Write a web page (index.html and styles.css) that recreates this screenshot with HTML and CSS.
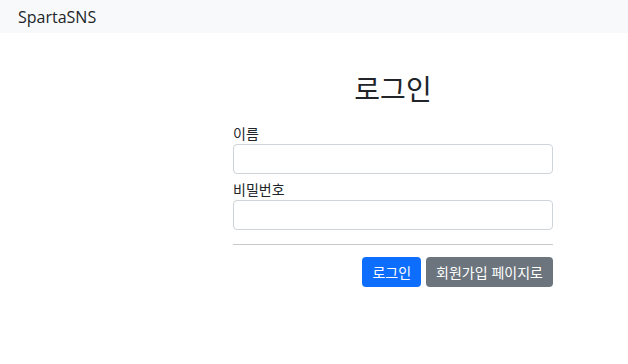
FILE: index.html
```html
<!DOCTYPE html>
<html lang="ko">
<head>
    <meta charset="UTF-8">
    <meta name="viewport" content="width=device-width, initial-scale=1.0">
    <title>SpartaSNS - 로그인</title>
    <link rel="stylesheet" href="styles.css">
</head>
<body>
    <nav class="navbar">
        <a class="navbar-brand" href="#">SpartaSNS</a>
    </nav>

    <div class="page">
        <div class="login-box">
            <h1 class="title">로그인</h1>
            <form id="loginForm">
                <div class="form-group">
                    <label for="username">이름</label>
                    <input type="text" id="username" name="username">
                </div>
                <div class="form-group">
                    <label for="password">비밀번호</label>
                    <input type="password" id="password" name="password">
                </div>
                <hr>
                <div class="actions">
                    <button type="submit" class="btn btn-primary">로그인</button>
                    <button type="button" class="btn btn-secondary">회원가입 페이지로</button>
                </div>
            </form>
        </div>
    </div>
</body>
</html>
```

FILE: styles.css
```css
* {
    margin: 0;
    padding: 0;
    box-sizing: border-box;
}

body {
    font-family: "Noto Sans CJK KR", "Noto Sans", sans-serif;
    color: #212529;
    background: #fff;
}

.navbar {
    background: #f8f9fa;
    height: 33px;
    display: flex;
    align-items: center;
    padding-left: 18px;
}

.navbar-brand {
    color: #212529;
    text-decoration: none;
    font-family: "Open Sans", "Noto Sans", sans-serif;
    font-size: 16px;
}

.page {
    display: flex;
    padding-left: 233px;
    padding-top: 38px;
}

.login-box {
    width: 320px;
}

.title {
    text-align: center;
    font-size: 28px;
    font-weight: 400;
    line-height: 34px;
    margin-bottom: 18px;
}

.form-group {
    margin-bottom: 5px;
}

.form-group label {
    display: block;
    font-size: 14px;
    line-height: 20px;
    margin-bottom: 1px;
}

.form-group input {
    width: 100%;
    height: 30px;
    border: 1px solid #ced4da;
    border-radius: 4px;
    padding: 4px 8px;
    font-size: 14px;
}

hr {
    border: none;
    border-top: 1px solid #c6c8ca;
    margin: 14px 0 12px;
}

.actions {
    display: flex;
    justify-content: flex-end;
    gap: 5px;
}

.btn {
    border: none;
    border-radius: 4px;
    height: 30px;
    padding: 0 10px;
    color: #fff;
    font-family: inherit;
    font-size: 14px;
    cursor: pointer;
}

.btn-primary {
    background: #0d6efd;
}

.btn-secondary {
    background: #6c757d;
}
```
